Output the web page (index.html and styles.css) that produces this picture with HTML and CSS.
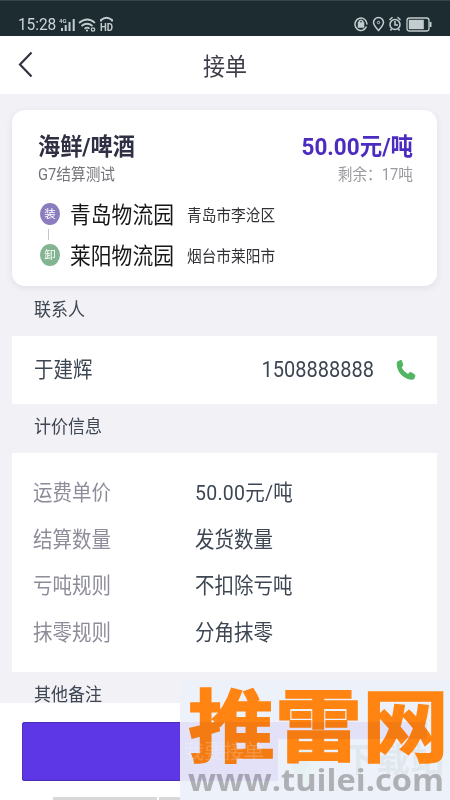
FILE: index.html
```html
<!DOCTYPE html>
<html lang="zh-CN">
<head>
<meta charset="utf-8">
<title>接单</title>
<link rel="stylesheet" href="styles.css">
</head>
<body>
<div class="screen">
  <header class="status">
    <span class="time t">15:28</span>
    <svg class="signals" width="56" height="18" viewBox="0 0 56 18" fill="none" stroke="#c3cdd0">
      <text class="net" x="0" y="6.500">4G</text>
      <path d="M3 12v3M6.700 9v6M10.500 6v9M14.700 3v12" stroke-width="2"/>
      <path d="M20 7q8.500-7 16 0M22.500 10q5.500-4.500 11 0M25.500 12.700q3-2 5 0" stroke-width="1.700"/>
      <circle cx="28" cy="14.500" r="1.100" fill="#c3cdd0" stroke="none"/>
      <circle cx="34" cy="13.500" r="1.700" stroke-width="1.300"/>
      <path d="M42 5.500V4Q47.500-.5 53 4V5.500" stroke-width="2"/>
      <text class="hd" x="41" y="15" textLength="13" lengthAdjust="spacingAndGlyphs">HD</text>
    </svg>
    <svg class="tools" width="79" height="18" viewBox="0 0 79 18" fill="none" stroke="#c3cdd0" stroke-width="1.500">
      <path d="M11 14A6 6.300 0 1 1 13 9.500M9 14.700Q11.500 14 12.500 11.500"/>
      <path d="M4.500 8h5v4h-5z" fill="#c3cdd0"/><path d="M5.200 8V6.500q1.800-2.500 3.600 0V8"/>
      <path d="M24.500 15.500Q19.500 10 19.500 7.500a5 5 0 0 1 10 0q0 2.500-5 8z"/><circle cx="24.500" cy="7.500" r="1.200" stroke-width="1"/>
      <circle cx="41" cy="9.500" r="5"/><path d="M41 6v4h3M35.500 5l3-2.700M46.500 5l-3-2.700M37.500 14l-1 1.500M44.500 14l1 1.500"/>
      <rect x="53" y="3" width="22" height="13" rx="2.500" stroke-width="1.300"/><path d="M54.800 4.800h15v9.400h-15z" fill="#c3cdd0" stroke="none"/><path d="M76.500 7v5" stroke-width="2"/>
    </svg>
  </header>
  <nav class="nav">
    <svg class="back" width="16" height="28" viewBox="0 0 16 28" fill="none" stroke="#35333f" stroke-width="2.200"><path d="M13.500 1.500L2 13.500l11.500 12"/></svg>
    <h1 class="t">接单</h1>
  </nav>
  <main class="content">
    <section class="order">
      <div class="row goods"><span class="t">海鲜/啤酒</span><span class="price t">50.00元/吨</span></div>
      <div class="row meta"><span class="t">G7结算测试</span><span class="left t">剩余：17吨</span></div>
      <div class="stop"><i class="badge load">装</i><b class="t">青岛物流园</b><span class="t">青岛市李沧区</span></div>
      <div class="link"></div>
      <div class="stop"><i class="badge unload">卸</i><b class="t">莱阳物流园</b><span class="t">烟台市莱阳市</span></div>
    </section>
    <h2 class="first"><span class="t">联系人</span></h2>
    <section class="contact">
      <span class="name t">于建辉</span><span class="phone t">1508888888</span>
      <svg width="20" height="22" viewBox="0 0 20 22"><path d="M4.600.9L1.700 2.200Q.5 3 .7 5.500C1.300 13 7 20 15.500 20.700Q17.400 20.900 18.300 19.700L19.300 17.300Q19.700 16 18.500 15.200L15.400 13.300Q14.300 12.700 13.400 13.600L12 15Q7.500 12.500 5.700 8.400L6.800 7Q7.500 6 7 4.900L6 1.800Q5.500.6 4.600.9z" fill="#52b561"/></svg>
    </section>
    <h2><span class="t">计价信息</span></h2>
    <dl class="pricing">
      <dt class="t">运费单价</dt><dd class="t amount">50.00元/吨</dd>
      <dt class="t">结算数量</dt><dd class="t">发货数量</dd>
      <dt class="t">亏吨规则</dt><dd class="t">不扣除亏吨</dd>
      <dt class="t">抹零规则</dt><dd class="t">分角抹零</dd>
    </dl>
    <h2 class="notes"><span class="t">其他备注</span></h2>
  </main>
  <footer class="actions">
    <div class="button"></div>
    <div class="handles"><i></i><i></i></div>
  </footer>
  <aside class="mark">
    <svg class="ghost-logo" width="50" height="58" viewBox="0 0 50 58"><path d="M5 5Q18-3 34 5L20 42Q8 26 5 5z" fill="#e6f0f3"/><path d="M20 42L36 5l10 10Q34 26 30 50z" fill="#e9f2f5"/></svg>
    <div class="ghost">下载站</div>
    <svg class="brand" width="270" height="120" viewBox="0 0 270 120">
      <text class="brand-name" x="8" y="75.500" textLength="261" lengthAdjust="spacingAndGlyphs">推雷网</text>
      <text class="brand-url" x="8" y="111" textLength="256" lengthAdjust="spacingAndGlyphs">www.tuilei.com</text>
    </svg>
    <div class="glow glow-left"></div>
    <div class="glow glow-right"></div>
    <div class="button-text">我要接单</div>
  </aside>
</div>
</body>
</html>
```
FILE: styles.css
```css
* { box-sizing: border-box; }
body, h1, h2, dl, dd { margin: 0; }
body {
  font-family: Roboto, "Noto Sans CJK SC", sans-serif;
  color: #3d4652;
}
.screen {
  position: relative;
  width: 450px;
  height: 800px;
  overflow: hidden;
  display: flex;
  flex-direction: column;
  background: #f1f1f6;
}
.t { display: inline-block; transform: scaleY(1.08); white-space: nowrap; }

.status {
  height: 36px;
  flex: none;
  background: #1d2c31;
  border-top: 1px solid #34464b;
  display: flex;
  align-items: flex-start;
  padding: 15px 18px 0;
  color: #cbd4d7;
}
.time { font-size: 15.500px; line-height: 19px; width: 41px; letter-spacing: -.1px; }
.signals { margin-top: 0; }
.net { font: bold 6px Roboto, sans-serif; fill: #c3cdd0; stroke: none; }
.hd { font: bold 11px Roboto, sans-serif; fill: #c3cdd0; stroke: none; }
.tools { margin-left: auto; margin-right: -1px; margin-top: -1px; }

.nav {
  height: 58px;
  flex: none;
  background: #fff;
  display: grid;
  grid-template-columns: 1fr auto 1fr;
  align-items: center;
}
.back { margin-left: 18px; }
h1 { font-size: 22px; line-height: 32px; padding-top: 3px; font-weight: 400; color: #3d3d47; }

.content { flex: 1; padding: 16px 13px 0 12px; overflow: hidden; min-height: 0; }
.order {
  height: 176px;
  background: #fff;
  border-radius: 13px;
  padding: 18px 24px 0 26px;
  box-shadow: 0 2px 7px rgba(60, 60, 90, .09);
}
.row { display: flex; justify-content: space-between; align-items: center; }
.goods { height: 31px; font-size: 22.200px; font-weight: 700; color: #303044; }
.price { color: #4c2cc0; font-size: 22.500px; }
.meta { height: 26px; font-size: 14.700px; color: #73737a; }
.left { color: #9b9b9f; }
.stop { display: flex; align-items: center; height: 30px; padding-left: 2px; }
.meta + .stop { margin-top: 14px; }
.badge {
  width: 20px;
  height: 22px;
  border-radius: 50%;
  font-size: 11.500px;
  line-height: 23px;
  font-style: normal;
  text-align: center;
  color: #fff;
  margin-right: 10px;
}
.load { background: #8a7cbe; }
.unload { background: #83b592; }
.stop .t { margin-top: -2px; }
.stop b { font-size: 20.800px; font-weight: 400; color: #151518; margin-right: 13px; }
.stop span { font-size: 14.700px; color: #303035; }
.link { width: 1px; height: 11px; margin-left: 10px; background: #c4c4d0; }

h2 { font-size: 17px; line-height: 26px; font-weight: 400; padding: 10px 22px 0; height: 49px; }
h2.first { height: 50px; padding-top: 11px; }
.contact {
  height: 68px;
  background: #fff;
  display: flex;
  align-items: center;
  padding: 0 21px 0 22px;
  font-size: 19.500px;
}
.name { margin-top: -6px; }
.phone { margin: -2px 22px 0 auto; font-size: 20px; }
.pricing {
  height: 219px;
  background: #fff;
  display: grid;
  grid-template-columns: 162px 1fr;
  grid-auto-rows: 46.700px;
  align-items: center;
  padding: 14px 21px 0;
  font-size: 19.500px;
}
.amount { letter-spacing: .25px; }
dt { color: #8d8d9a; }

.actions { height: 97px; flex: none; background: #fff; padding: 19px 22px 0; }
.button {
  height: 59px;
  border: 1px solid #4b2eb5;
  border-radius: 2px;
  background: #5d36e5;
}
.handles { display: flex; gap: 2px; margin: 16px 0 0 31px; }
.handles i { width: 104px; height: 3px; background: #d8d8d8; }

.mark {
  position: absolute;
  left: 180px;
  top: 680px;
  width: 270px;
  height: 120px;
  background: #edf2fa;
}
.glow { position: absolute; top: 42px; background: #f4eefd; mix-blend-mode: multiply; }
.glow-left { left: 0; width: 98px; height: 59px; }
.glow-right { left: 98px; width: 149px; height: 17px; }
.button-text {
  position: absolute;
  left: 4px;
  top: 57px;
  font-size: 20px;
  line-height: 30px;
  color: rgba(255, 255, 255, .2);
}
.ghost-logo { position: absolute; left: 101px; top: 60px; }
.ghost {
  position: absolute;
  left: 162px;
  top: 55px;
  font: bold 34px/46px "Noto Sans CJK SC", sans-serif;
  color: #e0e7ed;
}
.brand { position: absolute; left: 0; top: 0; }
.brand-name {
  font: 700 79px "Noto Sans CJK SC", sans-serif;
  fill: #ff8412;
  stroke: #ff8412;
  stroke-width: 1.500px;
}
.brand-url { font: bold 31px "Open Sans", sans-serif; fill: #aeb0b4; }
```
